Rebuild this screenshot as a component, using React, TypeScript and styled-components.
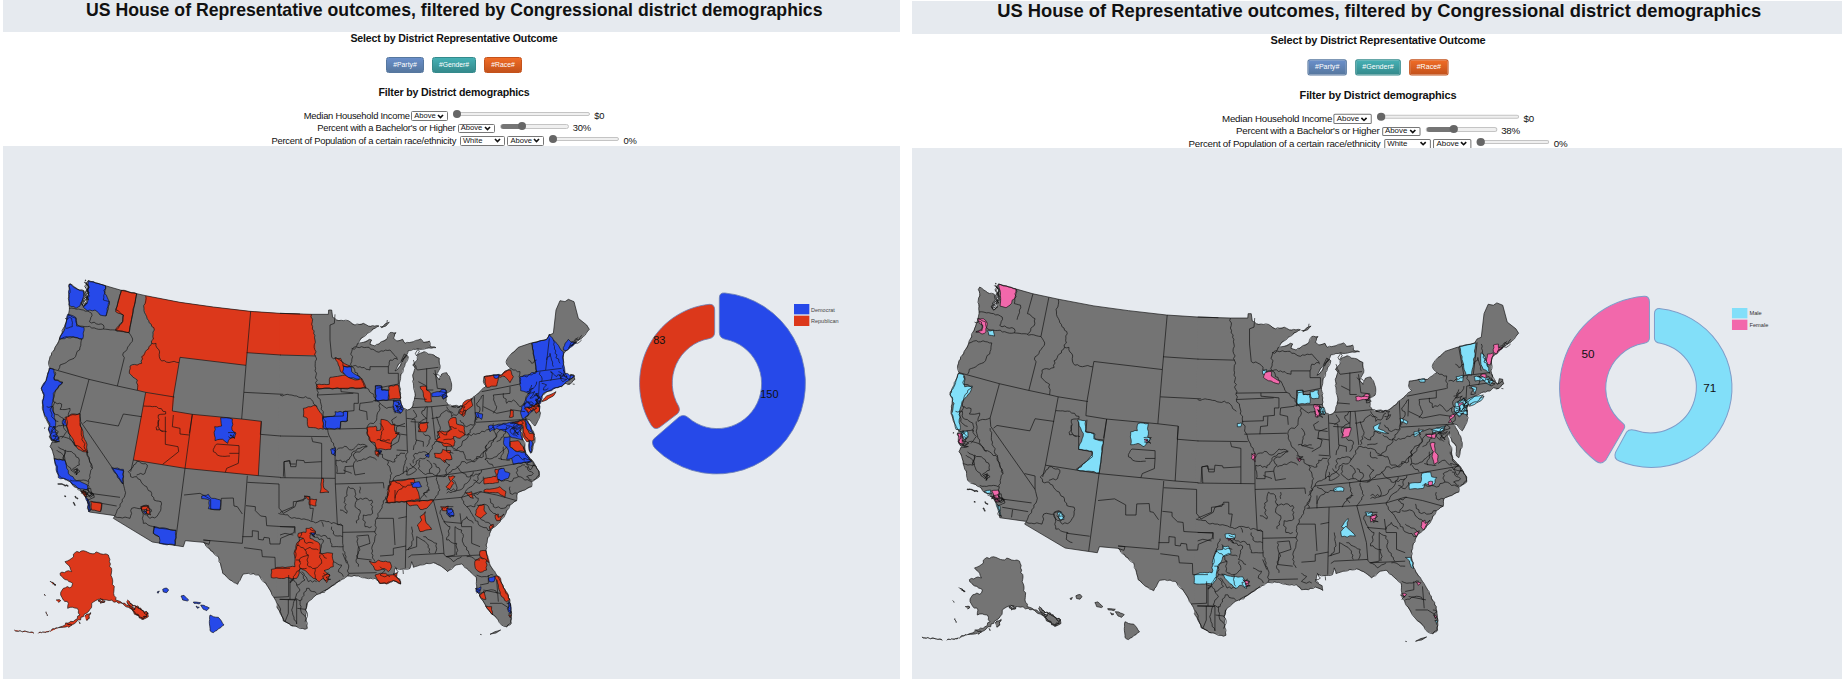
import React from "react";
import styled, { createGlobalStyle } from "styled-components";

const RED = "#dc381b";
const BLUE = "#2649e9";
const PINK = "#f268ab";
const CYAN = "#82dff9";
const GRAY = "#747474";
const BACK = "#e6eaef";

const GlobalStyle = createGlobalStyle`
  body { margin: 0; background: #fff; font-family: "Liberation Sans", Arial, sans-serif; color: #111; }
  * { box-sizing: border-box; }
`;

const Page = styled.main`
  display: flex;
  gap: 12px;
  width: 1844px;
  height: 684px;
  padding-left: 3px;
  overflow: hidden;
`;
const Panel = styled.section<{ $w: number; $top: number }>`
  width: ${(p) => p.$w}px;
  height: ${(p) => 679 - p.$top}px;
  margin-top: ${(p) => p.$top}px;
  background: ${BACK};
  overflow: hidden;
`;
const TitleBar = styled.header<{ $h: number }>`
  height: ${(p) => p.$h}px;
  display: flex;
  justify-content: center;
`;
const Title = styled.h1<{ $sx: number }>`
  margin: -1.5px 0 0 5px;
  font-size: 18.4px;
  line-height: 22px;
  white-space: nowrap;
  transform: scaleX(${(p) => p.$sx});
`;
const Controls = styled.div<{ $h: number }>`
  height: ${(p) => p.$h}px;
  background: #fff;
  display: flex;
  justify-content: center;
  overflow: hidden;
`;
const ControlStack = styled.div<{ $sx: number; $sy: number; $shift: number }>`
  width: 500px;
  margin-left: ${(p) => p.$shift}px;
  display: flex;
  flex-direction: column;
  align-items: center;
  transform: scale(${(p) => p.$sx}, ${(p) => p.$sy});
  transform-origin: 50% 0;
`;
const Heading = styled.h2<{ $top: number }>`
  margin: ${(p) => p.$top}px 0 0;
  font-size: 10.6px;
  letter-spacing: -0.16px;
  line-height: 12px;
  white-space: nowrap;
`;
const Buttons = styled.div`
  display: flex;
  gap: 8px;
  margin-top: 13px;
`;
const Pill = styled.button<{ $from: string; $to: string; $w: number }>`
  width: ${(p) => p.$w}px;
  height: 15.5px;
  padding: 0 0 1px;
  border: 1px solid ${(p) => p.$to};
  border-radius: 2.5px;
  background: linear-gradient(${(p) => p.$from}, ${(p) => p.$to});
  color: #fff;
  font: 6.8px "Liberation Sans", Arial, sans-serif;
  line-height: 11px;
`;
const Rows = styled.div`
  margin-top: 12.4px;
  display: flex;
  flex-direction: column;
  align-items: center;
`;
const Row = styled.div`
  height: 12.4px;
  display: flex;
  align-items: center;
  font-size: 9.4px;
  letter-spacing: -0.24px;
  line-height: 12px;
  white-space: nowrap;
`;
const Caption = styled.span<{ $w: number }>`
  width: ${(p) => p.$w}px;
  text-align: left;
`;
const Picker = styled.span<{ $w: number }>`
  width: ${(p) => p.$w}px;
  height: 9.4px;
  margin: 0 0 0 2.5px;
  padding: 0 3px 0 2px;
  border: 1px solid #777;
  border-radius: 1.5px;
  background: #fff;
  display: flex;
  align-items: center;
  justify-content: space-between;
  font-size: 7.6px;
  letter-spacing: 0;
  line-height: 8px;
`;
const Track = styled.span<{ $w: number }>`
  width: ${(p) => p.$w}px;
  height: 4.4px;
  margin: 0 4px 4px 5px;
  border: 1px solid #c4c4c4;
  border-radius: 3px;
  background: #efefef;
  display: flex;
  align-items: center;
`;
const Filled = styled.span`
  height: 4.4px;
  border-radius: 3px 0 0 3px;
  background: #757575;
  flex: none;
`;
const Thumb = styled.span`
  width: 8px;
  height: 8px;
  margin-left: -1px;
  border-radius: 50%;
  background: #666;
  flex: none;
`;
const Stage = styled.div`
  display: flex;
  align-items: flex-start;
`;
const MapDrawing = styled.svg`
  display: block;
  flex: none;
`;
const Donut = styled.svg<{ $top: number }>`
  display: block;
  flex: none;
  margin-top: ${(p) => p.$top}px;
  font-family: "Liberation Sans", Arial, sans-serif;
`;

/* ---------- map geometry ---------- */

const parse = (s: string) => s.trim().split(/\s+/).map((p) => p.split(",").map(Number));

/** Straight polyline from "x,y x,y ..." */
const line = (s: string, close = false) =>
  "M" + parse(s).map((p) => p.join(" ")).join("L") + (close ? "Z" : "");

/** Polyline whose segments are broken into small deterministic jogs, as rivers and coasts are. */
const rough = (s: string, close = false, amp = 3, step = 9) => {
  const pts = parse(s);
  if (close) pts.push(pts[0]);
  let seed = Math.abs(pts[0][0] * 31 + pts[0][1] * 17 + pts.length * 7) % 233280;
  const rnd = () => {
    seed = (seed * 9301 + 49297) % 233280;
    return seed / 233280 - 0.5;
  };
  let d = `M${pts[0][0]} ${pts[0][1]}`;
  for (let i = 1; i < pts.length; i++) {
    const [x0, y0] = pts[i - 1];
    const [x1, y1] = pts[i];
    const len = Math.hypot(x1 - x0, y1 - y0) || 1;
    const n = Math.max(1, Math.round(len / step));
    for (let k = 1; k < n; k++) {
      const t = k / n;
      const o = rnd() * 2 * amp;
      d += `L${(x0 + (x1 - x0) * t - ((y1 - y0) / len) * o).toFixed(1)} ${(y0 + (y1 - y0) * t + ((x1 - x0) / len) * o).toFixed(1)}`;
    }
    d += `L${x1} ${y1}`;
  }
  return d + (close ? "Z" : "");
};

const northWest = "900,162 840,160 750,154 640,141 540,127 437,107 410,101 364,91 316,77 265,62";
const coastWest =
  "265,62 258,70 268,82 262,90 266,102 258,118 262,128 252,138 245,130 248,118 255,108 252,92 238,90 222,80 210,71 206,78 210,90 206,110 207,135 208,150 205,165 200,180 190,205 178,238 165,262 150,290 146,305 150,325 145,340 138,362 124,385 132,405 128,425 127,440 132,460 142,485 150,500 145,510 155,520 148,530 155,543 175,545 155,548 150,560 158,575 162,595 165,605 172,625 175,645 190,655 210,665 222,680 240,687 250,700 262,718 268,740 268,756";
const southWest = "268,756 345,767 340,775 457,846 550,860 556,842 610,847";
const rioGrande = "610,847 632,872 655,890 668,940 690,960 713,973 730,942 745,940 775,945 800,975 820,1010 838,1040 850,1083 880,1098";
const eastTop = "0,160 95,163 145,163 146,150 155,150 158,172";
const eastNorth =
  "158,172 170,180 190,182 205,182 225,195 250,190 265,198 297,198 285,205 262,220 240,240 232,252 250,247 268,238 275,240 270,253 285,258 300,248 322,235 330,218 348,218 340,235 350,243 368,238 375,250 400,245 422,237 430,247 448,243 450,258 468,263 440,265 420,268 400,268 385,272 378,290 365,300 352,320 345,333 357,322 368,300 380,285 385,290 370,325 362,350 358,375 362,400 362,425 370,445 382,450 395,443 403,420 405,400 400,370 398,345 405,325 398,315 412,300 415,283 432,275 445,282 462,285 478,295 480,325 468,345 478,360 485,342 500,338 510,355 515,375 513,392 498,400 498,425 505,435 530,443 550,437 565,425 585,408 605,390 618,378 610,365 612,350 640,345 665,345 678,335 692,325 680,312 680,300 695,280 715,262";
const eastBorder = "715,262 750,250 800,238 808,225 820,220 828,150 840,122 855,125 865,118 882,125 895,175 920,195 928,208";
const eastCoast =
  "928,208 905,235 885,248 868,262 852,280 850,300 848,320 853,335 850,345 868,360 872,343 882,345 885,358 870,372 855,370 845,380 820,385 800,395 785,408 778,425 780,440 780,465 770,490 765,498 750,480 738,476 750,495 762,520 765,540 755,578 748,572 748,545 735,530 728,500 722,515 735,555 737,580 760,605 778,635 778,650 755,665 755,680 735,690 712,700 710,722 690,735 675,765 655,790 635,808 622,840 618,870 625,905 650,945 665,970 690,1020 695,1060 692,1090 680,1100 665,1095 650,1075 635,1062 618,1040 600,1010 590,985 588,950 570,935 545,912 528,915 503,935 485,920 460,908 420,915 400,922 395,905 390,925 365,928 345,925 340,945 360,958 362,972 340,962 320,970 300,970 285,955 260,955 235,948 203,948 175,965 140,990 105,1008 85,1025 77,1050 78,1075 82,1105 75,1108 40,1098 15,1085 -10,1040";

const westStates = [
  northWest, southWest,
  "410,101 387,218", "364,91 348,150", "373,293 352,378", "150,325 267,358 352,378 412,391 437,397 523,411",
  "540,292 520,411 517,453 577,463 725,477 784,484", "540,292 738,316", "752,154 738,316 725,477", "740,278 842,285", "732,397 850,403",
  "784,484 781,523 842,528", "577,463 555,625 525,855", "400,600 555,625 775,647 842,652", "784,484 775,647", "437,397 400,600 392,635",
  "267,358 240,460 242,485 370,672", "250,490 260,482 355,498 370,462 425,470", "742,647 727,850", "610,840 727,850", "742,667 837,672 837,745",
  "340,625 370,632 370,672", "270,700 360,712", "275,725 350,738", "305,732 302,755", "577,463 568,520",
  "650,552 717,557 717,580 688,580", "717,580 715,610 680,625 676,637", "520,465 517,500 540,505 540,522 567,525", "496,470 496,553 534,560 536,575 488,613",
  "850,650 852,605 868,602 870,612 887,612", "552,705 600,700 632,718 632,748 662,748 664,715 700,714 702,738 712,740 727,762",
  "727,830 757,830 757,812 775,814 775,838 790,840 792,832 808,834 810,852 840,852 842,835 882,818 884,802 800,797 798,770 782,768 766,752 766,740 738,737",
  "732,863 785,870 787,890 825,892 826,925 870,925", "838,745 850,760 885,740 890,725 918,715",
  "460,802 528,811", "610,840 630,842 627,853 610,847", "866,945 866,1010 822,1012", "838,1018 890,1018",
];
const westRivers = [
  "205,165 228,175 232,195 255,200 310,207 345,210 387,218", "387,218 398,237 368,285 373,293",
  "437,107 432,145 440,170 463,210 455,250 468,250 485,303 537,308", "455,250 440,270 425,290 425,310 390,318 388,340 412,360 412,391",
  "208,145 250,150 275,160 268,185 310,195 310,207", "316,77 310,120 328,125 318,168", "348,150 370,165 368,185 348,210",
  "178,238 200,230 245,237 240,262 222,295 180,315 175,330", "165,335 163,360 188,368 168,390 160,425 185,432 180,448 210,445 205,470 240,460",
  "140,440 160,440 162,460 190,475 192,500", "165,425 150,450 155,470 175,485", "200,470 205,520 220,550 262,577 268,600 277,625",
  "155,548 180,530 205,535 230,560", "162,595 190,600 195,570 220,580 238,600 238,615 215,630", "175,560 195,575 190,595 205,620 225,640 235,630",
  "240,490 250,545 268,600 277,625 265,660 268,700", "232,625 230,645 220,630 232,625", "210,660 250,660 265,665", "195,600 190,585 170,570", "160,500 190,495 200,515 185,535",
  "370,672 375,705 360,740 350,755 345,767", "392,650 410,650 440,680 455,700 462,720 483,725 483,745 470,770 450,775 430,760 425,740 440,735 455,755",
  "392,650 385,635 410,605 442,615 435,640 410,645", "345,770 390,775 395,745 425,745 430,790 465,800 460,820 478,830",
  "430,438 470,440 497,455 497,462 475,465 475,500 490,515", "475,480 470,510 500,515", "195,175 215,175 217,200 198,205",
  "650,552 640,575 660,588 690,588", "885,895 890,860 900,830 905,818",
];
const westDense = [
  "255,65 266,78 258,90 268,98 256,106 266,118 252,124 246,134 262,130 250,140 243,128 262,110 255,95 265,85 258,72",
  "262,70 254,80 264,88 259,100 268,108 258,116 250,130 256,136", "252,66 262,74 256,84 264,94 254,100 262,112 248,120 258,128",
  "150,498 165,505 155,515 172,520 158,528 178,535 160,540 175,515 162,498 150,530 165,545 178,545",
  "232,688 252,692 244,700 265,698 255,710 275,705 262,690 282,702 270,712 250,690 272,685 283,712 262,720 268,735 262,745 272,750",
  "240,692 248,698 258,694 262,704 252,702 268,708 278,700 272,696 280,708",
  "425,742 445,740 440,752 452,755 445,765 432,750", "684,518 706,518 700,530 690,525 705,535 685,530", "225,628 240,634 228,645 232,630",
];
const eastStates = [
  eastTop, eastBorder, "0,285 107,288", "110,386 258,384", "135,508 258,505", "280,422 360,420", "378,450 382,570", "455,440 466,540",
  "395,443 455,440 505,435", "583,410 587,487 740,478", "605,395 720,372", "0,653 165,655", "165,570 166,672", "0,528 145,530",
  "166,672 310,668 312,685", "166,672 172,792 188,797 188,850", "188,817 285,815", "338,662 440,652 590,632 755,603", "315,728 460,720 545,712",
  "380,725 376,925", "460,720 488,830 492,882", "385,892 395,885 490,880 498,890 600,885", "545,712 600,695 650,705 710,722",
  "755,250 770,335", "808,235 797,330", "765,335 845,325", "778,365 845,355", "778,365 776,405", "112,405 220,400",
  "165,163 163,190 150,195 150,240 155,292", "128,470 190,468 190,455 222,452 222,430", "180,508 182,485 202,483 203,455",
  "183,385 183,395 235,400 235,430 222,430", "412,330 475,322", "403,415 440,418", "95,532 98,545 125,550 125,655",
  "15,653 12,605 30,602 32,620 48,620 50,600 72,602 74,608 125,605", "286,425 286,378 305,378 305,390 325,390", "290,385 355,372 355,340 325,340 325,320 270,320 270,330",
  "280,425 240,430 238,450 260,455 262,480", "376,500 340,495 335,480 350,470", "345,520 380,525", "380,475 405,478 408,540 430,545 430,560",
  "375,490 350,500 348,520 360,525 355,545 330,560", "392,485 440,488 442,440", "170,640 195,640 195,620 220,618 225,645 255,640", "345,690 345,728",
  "378,858 340,865 340,885 300,888", "378,870 410,860 410,830", "290,775 340,775 345,855", "492,745 500,740 520,740", "540,760 545,800 575,800 575,850 600,860",
  "490,785 545,790", "498,890 525,885 525,800", "0,825 15,820 40,825", "0,800 45,800 45,820", "0,758 5,755 40,740 40,725 70,722 75,710 90,710 90,745 100,745 95,782",
  "188,880 200,910", "207,940 290,938", "230,828 265,825 270,850 235,862 232,895 275,900", "355,775 380,770",
  "625,945 625,970 600,975", "610,990 660,1000", "630,1030 665,1030 688,1045", "650,960 655,1025", "610,405 608,455", "640,405 690,400 690,380",
  "610,440 650,460 700,450 735,455", "0,1018 50,1020 50,1092", "25,1018 25,1060 15,1085", "52,1045 76,1048", "30,960 30,1018",
  "440,325 440,390 460,390", "415,365 440,378", "465,330 472,385 498,388", "380,572 350,570",
];
const eastRivers = [
  "95,163 98,200 105,240 107,290 110,375 112,405 125,440 130,470 140,505 165,570", "0,405 50,408 90,415 112,440",
  "258,384 275,400 300,430 300,445 290,480 262,500 262,520 270,540 290,570 320,600 335,640 325,700 310,730 290,775 285,830 275,880 285,905",
  "232,252 215,275 215,320 240,350 258,384", "382,570 375,610 370,640 345,650 320,690", "370,640 400,620 415,600 440,590 465,545 500,550 530,570 555,540 580,500 587,470",
  "188,850 203,910 203,948", "-5,760 50,775 100,785 140,785 188,797", "545,712 560,740 580,770 605,800 632,812",
  "545,712 565,685 590,665 605,630", "490,650 530,625 545,605 560,610 600,590 620,570 640,545 655,515 690,500", "155,292 180,300 195,320 215,320",
  "215,265 260,262 290,275 330,270 352,300", "270,330 240,320 215,320", "325,320 330,300 350,295", "440,440 425,460 440,475 415,490 420,515",
  "300,430 320,445 340,440 345,460", "320,600 345,605 350,585 375,580", "170,570 200,560 215,570 235,552 260,558", "170,640 168,600 200,608 215,580 240,565 262,558",
  "230,605 270,590 290,600", "220,618 230,600 220,585 262,560", "290,540 330,540", "455,475 480,470 500,450 520,460", "470,470 480,510 470,540",
  "500,440 515,470 535,460 545,445", "540,480 560,500 585,490", "520,570 550,575 560,600 585,605 590,590 610,590 620,555 650,530", "560,525 600,520 640,500 650,530",
  "620,555 615,600 650,590 680,560", "420,600 415,625 430,640 450,640 455,615 440,600", "400,610 405,580 430,575 445,585", "450,640 490,650 510,615 490,600",
  "390,610 410,630 380,645 380,620", "440,650 445,690 425,710 418,725", "470,652 480,690 460,720", "500,690 540,690 560,670 580,635", "520,660 530,690 500,700",
  "450,690 430,700 440,712", "200,700 205,680 225,690 228,715 275,720 278,760 250,765 255,800 275,800", "180,750 200,760 195,720 200,700", "230,715 225,740 240,750 230,790",
  "490,740 480,760 495,790 510,800 500,840 530,850 530,885", "545,790 560,770 580,790", "525,800 545,810 550,850 560,870 570,885", "430,830 470,850 465,880",
  "395,800 400,840 385,870", "410,830 440,850 450,880", "560,740 585,740 595,715 580,705 605,695", "590,735 620,735 640,760 655,770", "600,775 640,800",
  "630,715 640,740 670,745 690,735", "690,680 690,700 712,700", "650,660 690,665 715,650 755,665", "715,650 710,625 735,615", "580,660 600,670 610,650",
  "735,620 760,640 740,650 755,660", "105,820 150,835 155,860 190,860", "100,830 130,840 118,880 140,895", "155,800 160,822 188,830", "230,830 240,870 228,900 235,920",
  "160,905 185,915 175,935 190,950", "60,935 75,960 50,975 60,990 45,1015 65,1020 80,985 110,1000", "65,935 85,965 110,965", "50,975 40,950 60,925", "45,1018 35,1050 50,1092",
  "60,1020 65,1060 75,1070", "130,800 125,785", "560,890 600,900", "590,945 620,950 640,945", "600,1000 640,990 650,1000", "400,300 412,330", "460,340 480,350",
  "610,405 590,430 600,450 590,480", "640,405 650,440 640,460", "670,400 680,430 700,420 720,440 735,430", "693,325 720,335 722,372",
  "745,430 760,440 780,440", "735,430 745,460 735,478", "745,300 755,310 770,300", "755,375 745,400 735,430", "500,890 520,905 545,890", "810,335 830,350 845,340",
  "50,855 75,870 85,885 60,895 60,925 80,925", "75,870 90,862 115,870", "85,885 82,915 105,925 125,910 120,885", "105,925 110,960", "48,900 62,905", "70,835 80,850 100,850",
  "300,490 310,510 300,540 335,550", "480,515 500,525 510,500 530,505", "490,540 520,535", "345,665 370,680 350,700 345,715", "370,680 402,670", "300,920 315,930 300,945 330,950",
  "322,180 310,200 300,200", "190,630 215,640", "240,680 240,700", "500,560 500,575 520,580", "535,510 560,525", "530,620 560,650 600,640", "620,600 640,620", "655,595 690,600",
  "400,450 410,470 395,480", "430,520 450,530 440,560", "410,540 400,570", "460,610 480,630 470,650", "800,300 810,280 820,320", "820,240 825,280 840,310", "780,335 785,365", "815,335 812,362",
  "725,350 755,345 770,335", "770,365 760,385 740,395", "680,500 670,530 650,545", "640,490 645,510", "670,560 665,600", "695,595 715,585 735,600",
];
const eastDense = [
  "340,425 358,430 348,440 365,442 350,452 362,458 346,435 368,450 355,425", "762,405 780,410 765,420 782,425 768,432 780,438 760,440 775,415 768,400 784,422 765,436",
  "690,490 715,492 700,505 722,500 705,515 715,525 695,505 730,490 718,480 700,500 690,515 712,530", "540,455 558,450 545,465 555,440 530,438 515,440 540,442",
  "478,395 498,398 485,405 502,410 488,415 498,390", "835,335 855,345 840,352 860,358 848,365 838,345 862,350", "90,808 108,818 95,825 105,830 88,820",
  "130,940 150,945 138,952 152,958 135,962 128,948 145,938", "500,745 520,752 505,760 522,768 508,770 500,752", "760,385 745,400 765,395 750,415 775,400",
  "740,425 760,430 745,445 770,445 755,455 740,440", "730,595 755,600 740,612 765,615 750,630 735,605", "730,560 740,590 750,600 770,625 778,645 760,660",
  "895,232 880,250 872,258 905,240", "680,1030 692,1035 682,1045 694,1055 685,1062", "25,955 40,960 30,968 42,955", "585,985 600,990 590,1000", "785,370 800,375 790,390 805,385",
  "286,572 305,575 290,585 300,578", "155,565 168,575 160,585", "325,700 318,718 322,728", "345,920 355,935 340,940 350,950", "515,438 530,436 550,440",
  "75,1085 82,1070 76,1050 80,1030", "120,1003 150,983 180,960", "690,1070 694,1090 680,1102", "650,500 670,492 690,498 705,510 700,520 715,518 725,505", "850,330 858,345 866,358 880,350",
  "770,402 778,412 770,425 776,432 768,415", "905,226 896,240 888,236 882,246 872,250 866,264",
];

const alaska =
  "325,105 347,240 375,250 400,265 420,280 440,275 445,290 430,298 410,285 385,262 350,245 320,240 295,238 275,250 270,268 250,290 230,305 205,318 175,323 200,310 225,300 240,285 232,265 210,262 203,265 205,250 190,240 182,225 190,205 215,200 218,190 190,175 180,160 205,152 215,155 205,135 195,125 215,115 225,98 250,92 270,100 295,98 310,103";
const alaskaBits = [
  "175,323 165,327 155,330 150,335", "148,332 125,338 115,340", "102,340 85,336 60,332 43,330", "150,183 160,188 168,195 158,192", "168,240 182,242 175,247",
  "255,290 272,278 268,295 258,300", "132,222 136,228", "138,275 142,288", "236,305 240,312", "300,235 315,243 302,250 295,240 310,246",
  "382,240 400,258 395,262 412,268 408,275 430,278 425,288 440,290 425,298 405,275 390,262 380,245", "390,250 445,280 428,296 398,272 412,258 440,285", "195,310 215,315 205,322",
];
const hawaii = [
  "488,208 500,204 506,210 500,218 490,216", "471,216 478,213 474,220", "543,228 552,226 566,240 562,243 548,240", "580,246 602,248 598,252 582,250",
  "588,258 598,262 592,265", "602,255 612,256 628,264 620,272 610,268", "630,285 640,290 655,292 672,315 640,338 630,332 628,305",
];

type Patch = [string, string];
const dakota = "-2,160 95,163 98,200 105,240 107,286 -2,284";
const partyWest: Patch[] = [
  [BLUE, "207,72 233,88 250,93 248,118 240,138 228,145 207,135"],
  [BLUE, "265,62 316,77 314,100 328,125 318,168 300,165 285,150 262,152 250,142 265,118"],
  [BLUE, "203,163 228,173 230,198 252,202 248,237 215,230 178,238 195,205"],
  [RED, "364,91 410,101 387,218 346,210 368,185 370,165 347,155"],
  [BLUE, "147,325 162,328 164,360 188,366 160,400 156,440 166,480 165,505 178,545 155,540 146,505 150,492 132,460 127,430 132,405 124,385 138,362"],
  [BLUE, "190,478 202,480 198,498 187,492"],
  [RED, "195,472 215,462 240,461 242,500 258,545 264,578 235,568 222,545 205,515"],
  [BLUE, "163,596 195,600 205,640 230,662 262,675 262,690 240,687 215,672 205,660 175,653"],
  [BLUE, "335,623 370,628 368,672"], [RED, "272,723 306,730 301,755 275,750"], [BLUE, "255,705 264,718 272,750 266,756 262,725"], [RED, "243,694 256,695 258,712"],
  [RED, "422,740 445,736 452,765 440,762 440,748 425,750"], [BLUE, "462,800 528,811 525,856 478,850 478,832 460,820"],
  [BLUE, "605,708 625,703 635,715 662,720 660,750 625,746 628,720 605,716"], [BLUE, "430,753 440,756 436,762"],
];
/* Whole-state areas; their borders are drawn by the state lines. */
const partyStates: Patch[] = [
  [RED, "437,107 540,127 640,141 752,154 738,316 540,292 537,308 485,303 468,250 455,250 463,210 440,170 432,145"],
  [RED, "455,250 468,250 485,303 537,308 520,411 412,391 412,360 388,340 390,318 425,310 425,290"],
  [RED, "752,154 842,160 842,285 740,278"],
  [RED, "437,397 523,411 517,453 577,463 555,625 400,600"],
  [RED, "577,463 784,484 775,647 555,625"],
];
const denver: Patch = [BLUE, "662,473 697,477 696,510 708,520 704,532 690,535 683,550 668,538 645,542 644,500 665,498"];
const partyEast: Patch[] = [
  [RED, "165,293 182,295 186,305 210,318 200,345 182,335 175,315"],
  [RED, "110,374 148,373 150,352 195,345 225,360 245,355 258,384 110,386"],
  [BLUE, "190,318 213,320 215,335 240,352 236,358 205,352 188,335"],
  [RED, "70,445 108,437 128,470 130,508 85,502 82,475 70,470"], [BLUE, "128,472 165,467 165,455 203,455 202,483 182,485 180,506 132,506"],
  [RED, "260,503 288,498 290,512 302,510 303,478 322,482 335,495 345,492 345,515 358,518 335,545 332,568 287,568 285,548 272,545 262,525"], [BLUE, "286,377 305,378 305,390 328,390 325,420 288,423"],
  [RED, "326,380 355,375 362,415 326,418"], [BLUE, "340,420 362,422 370,448 362,460 342,455"], [RED, "285,572 300,575 295,590 286,583"], [BLUE, "295,570 305,572 300,582"],
  [RED, "420,380 440,380 440,390 452,400 455,425 435,425 430,400"], [BLUE, "455,400 480,395 485,388 498,390 502,410 490,418 482,408 456,410"],
  [RED, "420,490 445,487 438,515 415,515"],
  [RED, "505,485 512,475 528,473 530,492 553,500 555,525 540,535 520,530 525,545 522,558 490,558 480,545 468,540 480,532 472,515 500,515 515,508 508,498"],
  [RED, "550,428 575,415 578,437 560,450 550,470 538,460"], [BLUE, "585,458 608,462 605,478 590,472"], [RED, "463,580 485,578 488,568 512,572 510,580 516,598 498,598 495,608 480,595 465,592"],
  [BLUE, "435,585 447,580 447,592"], [BLUE, "152,568 166,563 166,588 155,582"],
  [RED, "612,350 640,345 665,345 675,333 692,330 700,350 690,368 675,350 655,350 650,378 620,382"], [BLUE, "640,345 658,343 655,353 643,354"],
  [BLUE, "755,250 800,238 808,222 820,240 850,275 850,310 855,340 884,348 866,362 845,378 790,400 782,430 745,440 725,460 732,430 748,402 722,392 720,350 770,335"],
  [BLUE, "850,270 855,250 865,238 872,245 890,248 872,262 858,272"],
  [BLUE, "725,440 745,425 760,450 745,465 728,478 722,460"], [RED, "733,445 755,442 775,430 778,453 768,460 760,448 745,458"],
  [RED, "692,448 700,452 700,470 688,472"], [BLUE, "625,498 680,490 730,482 720,510 728,540 690,530 680,515 650,505 630,515"],
  [RED, "695,488 732,480 740,505 748,520 763,522 762,540 740,545 728,525 728,495"], [BLUE, "735,478 750,495 760,520 740,505"], [BLUE, "748,540 757,545 752,580 747,565"],
  [BLUE, "672,532 690,530 690,560 710,575 735,578 755,605 700,613 695,595 680,598 685,570 672,555"], [RED, "690,545 715,542 730,560 735,576 705,572 690,560"],
  [RED, "612,655 648,650 645,628 665,625 655,668 612,672"], [BLUE, "655,630 672,625 675,635 690,640 685,655 665,663 652,655"], [RED, "612,690 660,680 678,695 675,712 655,698 612,696"],
  [RED, "505,648 525,650 515,662 522,670 508,688 498,680 512,665"], [RED, "556,698 575,695 580,715 570,712"],
  [RED, "330,665 402,656 405,670 412,690 418,718 380,725 320,728 322,700"], [BLUE, "392,668 418,665 425,680 398,682"],
  [RED, "378,724 460,720 440,745 420,748 412,735 390,738"], [RED, "420,770 436,755 436,780 445,795 455,808 420,815 412,795 425,780"],
  [RED, "482,740 505,738 505,750 488,752"], [BLUE, "500,745 515,745 522,768 510,772 500,762"], [RED, "598,735 612,733 612,750 620,760 603,775 586,765 592,745"],
  [RED, "645,765 655,762 655,772 672,762 660,782 650,782"], [RED, "628,800 640,793 640,800 630,810"],
  [RED, "125,655 130,655 132,685 147,697 120,698"], [RED, "72,708 88,710 88,718 110,718 108,738 88,735 88,722"],
  [RED, "55,820 78,817 78,805 95,802 108,815 90,825 90,835 118,850 122,880 142,878 158,880 160,920 132,932 150,945 140,968 130,955 118,965 100,955 80,935 62,925 50,955 -26,953 -26,928 0,922 45,920 42,880 50,850 70,835 55,832"],
  [BLUE, "92,818 106,820 100,828"],
  [RED, "268,903 285,908 295,900 310,905 330,906 335,920 325,935 312,925 300,930 285,930 280,918"],
  [RED, "285,945 310,940 330,945 352,938 350,950 362,965 362,972 340,962 320,972 298,970 290,955"],
  [RED, "600,873 618,872 622,890 628,908 600,890"], [RED, "585,902 600,893 620,900 620,930 600,937 586,925"], [BLUE, "625,955 645,948 642,965 628,965"],
  [RED, "645,948 658,950 665,970 690,1018 680,1025 665,1010 655,975"], [BLUE, "588,985 603,980 598,1000 588,995"], [RED, "598,1005 612,993 618,1018 605,1015"],
  [RED, "617,1038 635,1040 638,1065 628,1052"], [BLUE, "685,1025 692,1035 693,1060 685,1055"], [RED, "686,1065 694,1065 690,1072"],
];
const genderWest: Patch[] = [
  [PINK, "236,42 288,57 286,78 270,105 258,113 240,108 242,85"], [PINK, "172,146 190,146 202,160 198,185 186,192 168,185 185,178 188,165 178,160"],
  [CYAN, "202,182 220,180 224,198 214,196 206,195"], [CYAN, "115,310 132,314 134,350 157,348 150,368 126,395 118,425 120,480 108,478 95,430 102,400 90,372 102,345"],
  [CYAN, "122,485 142,482 144,502 132,508"], [PINK, "113,490 125,492 130,520 118,522"],
  [CYAN, "472,450 497,452 496,485 525,492 525,507 549,512 538,608 472,600 516,555 516,543 476,538 490,490"],
  [CYAN, "654,460 685,460 683,500 692,508 672,530 654,520 632,524 632,485 652,482"], [PINK, "672,508 684,508 680,518"],
  [CYAN, "193,664 212,660 215,672 202,670"], [PINK, "215,662 235,660 238,695 226,695 222,680"], [CYAN, "228,700 240,708 244,740 238,730"],
  [CYAN, "412,728 424,725 432,748 420,750"],
];
const genderEast: Patch[] = [
  [CYAN, "187,302 200,298 198,314 188,312"], [PINK, "195,308 214,304 214,318 240,335 236,342 205,332 190,322"], [CYAN, "292,362 308,360 310,374 330,372 330,400 292,404"],
  [CYAN, "330,365 355,360 356,385 335,385"], [PINK, "342,403 358,405 356,440 346,440"], [CYAN, "358,410 372,412 375,432 362,432"], [PINK, "467,380 492,378 495,372 508,374 506,390 490,388 468,392"],
  [PINK, "432,475 453,472 445,500 425,503"], [PINK, "155,553 166,550 166,575 154,565"], [CYAN, "112,460 124,458 122,470 112,470"], [PINK, "290,563 304,568 298,575"],
  [CYAN, "520,470 542,458 535,475 566,490 545,487 525,482"], [CYAN, "600,444 624,455 620,462 602,455"],
  [CYAN, "778,228 828,219 815,315 798,315"], [CYAN, "768,320 788,315 788,335 770,335"], [CYAN, "655,328 675,326 675,336 660,336"],
  [PINK, "880,225 895,222 895,232 908,232 890,252 880,245"], [PINK, "862,252 880,248 870,285 860,282"], [CYAN, "843,248 852,255 862,285 870,310 850,298 842,275"],
  [CYAN, "822,320 850,320 880,332 868,345 850,330 825,333"], [PINK, "840,315 858,312 858,325"], [CYAN, "812,350 830,352 825,368"],
  [CYAN, "765,400 790,385 800,392 820,380 850,375 830,395 800,405 803,435 785,430 778,440 762,430"], [PINK, "748,440 765,432 780,422 778,412 790,395 775,400 780,420 755,445 745,458 755,455"],
  [CYAN, "642,485 670,480 655,492 643,500"], [PINK, "677,492 708,490 705,505 682,500"], [CYAN, "695,478 735,468 725,485 700,488"],
  [PINK, "690,520 705,518 705,545 714,555 714,575 702,583 696,560 700,545"], [CYAN, "628,640 662,637 665,610 692,606 695,620 710,622 700,645 675,640 670,655 628,658"], [PINK, "684,636 698,634 696,646 686,646"],
  [CYAN, "401,656 418,650 432,655 430,664 402,665"], [CYAN, "495,726 516,725 516,738 500,738"], [PINK, "510,740 530,732 525,752 512,756"],
  [CYAN, "424,770 444,745 442,765 438,775"], [CYAN, "438,768 450,780 466,798 425,800 422,785"], [PINK, "665,755 675,750 675,760 690,750 672,780 663,770"], [PINK, "642,790 658,782 650,800"],
  [CYAN, "75,792 105,792 105,804 78,805"], [PINK, "82,803 94,806 86,812"], [CYAN, "50,840 68,838 68,828 85,828 93,850 68,860 50,905 48,930 38,942 -18,940 -18,916 0,908 36,908 38,870"],
  [CYAN, "65,912 100,920 128,920 138,940 140,955 125,945 105,955 85,935"], [PINK, "130,930 148,935 142,950"], [CYAN, "616,862 632,862 642,895 634,892 628,872"],
  [PINK, "647,936 663,938 655,946"], [PINK, "607,970 620,973 612,980"], [PINK, "702,1036 710,1038 706,1046"], [CYAN, "706,1052 713,1052 710,1060"],
];

const stroke = { stroke: "#111", strokeOpacity: 0.85, strokeWidth: 2.3, fill: "none", strokeLinejoin: "round" as const };
const Patches = ({ list }: { list: Patch[] }) => (
  <>{list.map(([c, p], i) => <path key={i} d={rough(p, true, 2, 8)} {...stroke} fill={c} />)}</>
);
const Lines = ({ list, amp = 0 }: { list: string[]; amp?: number }) => (
  <path d={list.map((s) => (amp ? rough(s, false, amp, 7) : line(s))).join("")} {...stroke} />
);

const Districts = ({ mode, width, height, box }: { mode: "party" | "gender"; width: number; height: number; box: string }) => {
  const party = mode === "party";
  const akFill = party ? RED : GRAY;
  const hiFill = party ? BLUE : GRAY;
  return (
    <MapDrawing width={width} height={height} viewBox={box} preserveAspectRatio="none" aria-label="Congressional districts">
      <path d={line(`${northWest} ${coastWest} ${southWest} ${rioGrande} 882,1090 882,162`, true)} fill={GRAY} />
      <g transform="translate(840 0)">
        <path d={line(`${eastTop} ${eastNorth} ${eastBorder} ${eastCoast}`, true)} fill={GRAY} />
        <path d={rough("785,425 800,408 828,395 820,408 800,420", true, 1)} {...stroke} fill={party ? RED : CYAN} />
      </g>
      {party ? (
        <>
          {partyStates.map(([c, p]) => <path key={p} d={line(p, true)} fill={c} />)}
          <Patches list={[...partyWest, denver]} />
          <g transform="translate(840 0)">
            <path d={line(dakota, true)} fill={RED} />
            <Patches list={partyEast} />
          </g>
        </>
      ) : (
        <>
          <g transform="matrix(.9637 0 0 .9901 37.4 20.5)"><Patches list={genderWest} /></g>
          <g transform="matrix(.9637 0 0 .9901 846.9 20.5)"><Patches list={genderEast} /></g>
        </>
      )}
      <Lines list={westStates} />
      <Lines list={westRivers} amp={3} />
      <Lines list={[coastWest, rioGrande]} amp={2} />
      <Lines list={westDense} amp={3} />
      <g transform="translate(840 0)">
        <Lines list={eastStates} />
        <Lines list={eastRivers} amp={3.6} />
        <Lines list={[eastNorth, eastCoast]} amp={2} />
        <Lines list={eastDense} amp={3} />
        <path d={rough("304,203 315,192 328,187 318,198", true, 1) + rough("630,1123 645,1115 662,1110 648,1119", true, 1)} {...stroke} fill={GRAY} />
        <path d="M365 300l8-18 4 2-10 22zM406 280l8-12 4 6-8 14zM600 1123l5 1M369 930l1 12M862 374l8-2M878 372l6 1" {...stroke} />
      </g>
      <path d={["173,671 190,674 205,679", "193,708 197,711", "225,708 234,717", "219,727 226,737", "133,503 135,505", "255,62 258,60"].map((s) => rough(s, false, 2, 3)).join("")} {...stroke} strokeWidth={4} />
      <g transform="translate(0 780)">
        <path d={rough(alaska, true, 3, 7)} {...stroke} fill={akFill} />
        {alaskaBits.map((s) => <path key={s} d={rough(s, false, 3, 4)} {...stroke} strokeWidth={2.8} fill={akFill} />)}
        {hawaii.map((s) => <path key={s} d={rough(s, true, 1, 7)} {...stroke} fill={hiFill} />)}
      </g>
    </MapDrawing>
  );
};

/* ---------- controls ---------- */

const Chevron = () => (
  <svg width="7" height="5" viewBox="0 0 7 5"><path d="M1 1l2.5 2.6L6 1" fill="none" stroke="#111" strokeWidth="1.6" /></svg>
);
const Select = ({ label, w }: { label: string; w: number }) => <Picker $w={w}>{label}<Chevron /></Picker>;
const Slider = ({ w, value }: { w: number; value: number }) => (
  <Track $w={w}>
    <Filled style={{ width: value * (w - 8) }} />
    <Thumb />
  </Track>
);

const Filters = ({ h, sx, sy, shift, degree }: { h: number; sx: number; sy: number; shift: number; degree: number }) => (
  <Controls $h={h}>
    <ControlStack $sx={sx} $sy={sy} $shift={shift}>
      <Heading $top={0}>Select by District Representative Outcome</Heading>
      <Buttons>
        <Pill $w={38} $from="#6a8fca" $to="#56779f">#Party#</Pill>
        <Pill $w={44} $from="#45b0b4" $to="#348a8c">#Gender#</Pill>
        <Pill $w={38} $from="#f06c26" $to="#c4521b">#Race#</Pill>
      </Buttons>
      <Heading $top={13}>Filter by District demographics</Heading>
      <Rows>
        <Row><Caption $w={105}>Median Household Income</Caption><Select w={37} label="Above" /><Slider w={137} value={0} />$0</Row>
        <Row><Caption $w={138}>Percent with a Bachelor's or Higher</Caption><Select w={37} label="Above" /><Slider w={69} value={degree / 100} />{degree}%</Row>
        <Row><Caption $w={186}>Percent of Population of a certain race/ethnicity</Caption><Select w={45} label="White" /><Select w={37} label="Above" /><Slider w={70} value={0} />0%</Row>
      </Rows>
    </ControlStack>
  </Controls>
);

const heading = "US House of Representative outcomes, filtered by Congressional district demographics";

export default function App() {
  return (
    <>
      <GlobalStyle />
      <Page>
        <Panel $w={897} $top={0}>
          <TitleBar $h={32}><Title $sx={0.961}>{heading}</Title></TitleBar>
          <Filters h={114} sx={1} sy={1} shift={5} degree={30} />
          <Stage>
            <Districts mode="party" width={607} height={533} box="9 -342 1821 1599" />
            <Donut $top={124} width={290} height={220} viewBox="0 0 870 660">
              <g stroke="#6b80b5" strokeWidth="2.5">
                <path fill={BLUE} d="M328 84Q328 67 345 69A266 272 0 1 1 137 537Q121 520 131 507L207 441Q221 431 235 443A133 135 0 1 0 346 208Q328 204 328 187Z" />
                <path fill={RED} d="M314 120Q314 102 298 103A232 238 0 0 0 124 466Q134 482 149 472L204 430Q212 420 206 409A133 135 0 0 1 297 206Q314 203 314 186Z" />
              </g>
              <g fontSize="33" fill="#111" textAnchor="middle"><text x="148" y="222">83</text><text x="478" y="383">150</text></g>
              <path fill={BLUE} d="M552 102h46v31h-46z" /><path fill={RED} d="M552 137h46v31h-46z" />
              <g fontSize="16.5" fill="#444"><text x="603" y="125">Democrat</text><text x="603" y="159">Republican</text></g>
            </Donut>
          </Stage>
        </Panel>
        <Panel $w={930} $top={1}>
          <TitleBar $h={32.7}><Title $sx={0.997}>{heading}</Title></TitleBar>
          <Filters h={114.5} sx={1.0377} sy={1.01} shift={2} degree={38} />
          <Stage>
            <Districts mode="gender" width={618} height={531} box="14.25 -342 1786.6 1577" />
            <Donut $top={132} width={312} height={220} viewBox="0 0 930 660" preserveAspectRatio="none">
              <g stroke="#7e9cc9" strokeWidth="3">
                <path fill={PINK} d="M356 66Q356 48 340 49A275 276 0 0 0 196 543Q212 556 226 540L280 447Q286 437 277 430A137.5 136 0 0 1 340 190Q356 187 356 174Z" />
                <path fill={CYAN} d="M371 101Q371 84 389 86A241 239 0 1 1 266 543Q248 536 255 517L288 456Q296 446 313 451A137.5 136 0 1 0 389 190Q371 188 371 174Z" />
              </g>
              <g fontSize="35" fill="#111" textAnchor="middle"><text x="173" y="234">50</text><text x="536" y="335">71</text></g>
              <path fill={CYAN} d="M602 84h46v31h-46z" /><path fill={PINK} d="M602 119h46v31h-46z" />
              <g fontSize="17" fill="#333"><text x="654" y="106">Male</text><text x="654" y="140">Female</text></g>
            </Donut>
          </Stage>
        </Panel>
      </Page>
    </>
  );
}
